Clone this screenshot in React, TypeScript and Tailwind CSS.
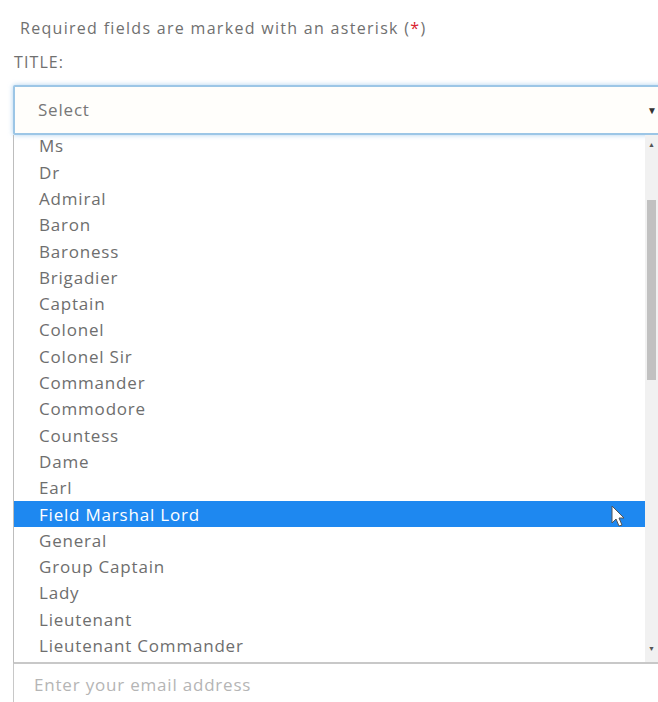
import type { ReactNode } from 'react';

const titles = [
  'Ms',
  'Dr',
  'Admiral',
  'Baron',
  'Baroness',
  'Brigadier',
  'Captain',
  'Colonel',
  'Colonel Sir',
  'Commander',
  'Commodore',
  'Countess',
  'Dame',
  'Earl',
  'Field Marshal Lord',
  'General',
  'Group Captain',
  'Lady',
  'Lieutenant',
  'Lieutenant Commander',
];

const active = 'Field Marshal Lord';

function Cursor() {
  return (
    <svg width="16" height="24" viewBox="0 0 16 24" className="absolute right-[18px] top-[4px]">
      <path
        d="M1 1 L1 18 L5 14 L8 21 L11 20 L8 13 L13 13 Z"
        fill="#ffffff"
        stroke="#555555"
        strokeWidth="1"
        strokeLinejoin="round"
      />
    </svg>
  );
}

function Option({ children, selected }: { children: ReactNode; selected?: boolean }) {
  return (
    <div
      className={
        selected
          ? 'relative flex h-[26.3px] items-center bg-[#1e88f0] pl-[25px] text-white'
          : 'flex h-[26.3px] items-center pl-[25px] text-[#6e6e6e]'
      }
    >
      {children}
      {selected ? <Cursor /> : null}
    </div>
  );
}

export default function App() {
  return (
    <div className="h-[702px] w-[658px] overflow-hidden bg-white font-['Open_Sans',sans-serif]">
      <p className="pl-[20px] pt-[16px] text-[16px] leading-[24px] tracking-[1.3px] text-[#707070]">
        Required fields are marked with an asterisk (<span className="text-[#d9232f]">*</span>)
      </p>
      <p className="mt-[12px] pl-[14px] text-[16px] leading-[20px] tracking-[1.1px] text-[#707070]">TITLE:</p>

      <div className="ml-[13px] mt-[13px]">
        <div className="flex h-[50px] w-[660px] items-center justify-between rounded-[2px] border-2 border-[#9cc6e6] bg-[#fffefb] pl-[23px] pr-[14px] shadow-[0_0_5px_rgba(120,180,230,0.6)]">
          <span className="text-[17px] tracking-[0.8px] text-[#777777]">Select</span>
          <span className="text-[10px] text-[#333333]">▼</span>
        </div>

        <div className="flex h-[529px] border-b-2 border-l border-[#c8c8c8] border-l-[#bdbdbd]">
          <div className="h-full flex-1 overflow-hidden">
            <div className="-mt-[2px] text-[17px] tracking-[0.8px]">
              {titles.map((t) => (
                <Option key={t} selected={t === active}>
                  {t}
                </Option>
              ))}
            </div>
          </div>
          <div className="flex h-full w-[13px] flex-col items-center bg-[#f1f1f1]">
            <span className="mt-[6px] text-[7px] leading-none text-[#555555]">▲</span>
            <div className="mt-[52px] h-[180px] w-[9px] bg-[#c1c1c1]" />
            <div className="flex-1" />
            <span className="mb-[10px] text-[7px] leading-none text-[#555555]">▼</span>
          </div>
        </div>

        <div className="h-[40px] border-l border-[#c8c8c8] pl-[20px] pt-[8px] text-[17px] tracking-[0.8px] text-[#b5b5b5]">
          Enter your email address
        </div>
      </div>
    </div>
  );
}
